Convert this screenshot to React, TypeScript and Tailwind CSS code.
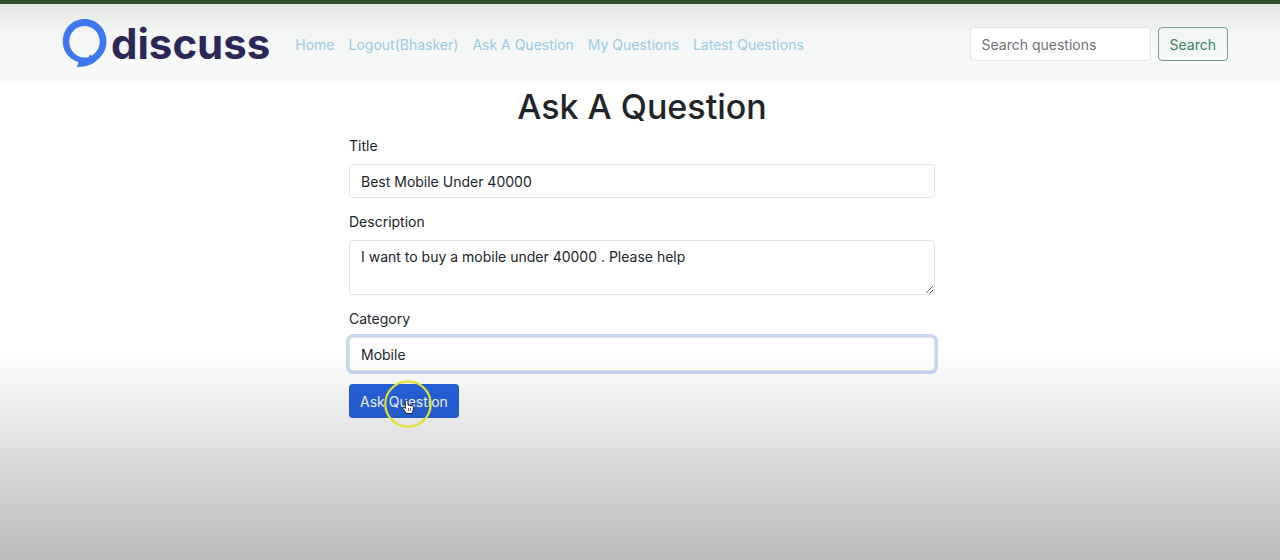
import { useState } from "react";

const links = ["Home", "Logout(Bhasker)", "Ask A Question", "My Questions", "Latest Questions"];

const fieldClass =
  "block w-full rounded-[4px] border border-[#e2e4e6] bg-white px-[11px] text-[#212529] outline-none";

function Logo() {
  return (
    <a href="#home" className="flex shrink-0 items-center" aria-label="discuss">
      <svg viewBox="0 0 46 50" className="h-[50px] w-[46px]" aria-hidden="true">
        <path
          fill="#3f78ee"
          fillRule="evenodd"
          d="M22.5 0C10.4 0 .8 9.600.8 22.500c0 9.700 6 17.600 15.400 20.500 0 2-.5 3.300-1.400 4.900C22 48.400 30 46.400 35 41c6-4.500 9.500-11 9.500-18.500C44.500 9.600 34.600 0 22.500 0Zm0 7C31 7 37.700 13.800 37.700 22.500c0 6-3 11-7.700 13.900-1.100.1-1.900-.2-2.500-.9-.1 1.200-.4 2-1 2.700-1.300.3-2.600.4-4 .4C14 38.600 7.300 31.300 7.300 22.500 7.300 13.800 14 7 22.500 7Z"
        />
      </svg>
      <span className="ml-[3px] text-[42px] font-bold leading-[50px] text-[#2b2857]">discuss</span>
    </a>
  );
}

function Pointer() {
  return (
    <svg
      viewBox="0 0 48 48"
      className="pointer-events-none absolute -top-1 left-[35px] z-10 h-12 w-12"
      aria-hidden="true"
    >
      <circle cx="24" cy="24" r="22.700" fill="none" stroke="#e4de2c" strokeWidth="2.200" />
      <path
        d="M22.500 20.500c1.100 0 1.500.7 1.500 1.500v3l4.300.9c.8.2 1.200.7 1.200 1.500l-.5 3.600-1.200 2.500h-5.300L19 28.700c-.500-1 .800-1.800 1.600-1l.700.7V22c0-.9.400-1.500 1.200-1.500Z"
        fill="#fff"
        stroke="#151b2b"
        strokeWidth="1"
      />
      <path d="M24.500 28v3M26.500 28v3" stroke="#151b2b" strokeWidth=".7" />
    </svg>
  );
}

export default function App() {
  const [title, setTitle] = useState("Best Mobile Under 40000");
  const [description, setDescription] = useState("I want to buy a mobile under 40000 . Please help");
  const [category, setCategory] = useState("Mobile");

  return (
    <div className="relative min-h-screen bg-white font-['Inter',sans-serif] text-[14px] text-[#212529]">
      <header className="border-t-4 border-[#2c5229] bg-linear-to-b from-[#e3e5e5] via-[#f3f5f5] via-35% to-[#f8faf9] to-70%">
        <div className="flex h-20 items-center pl-[62px] pr-[52px]">
          <Logo />
          <nav className="ml-[25px] flex grow items-center gap-[14px] whitespace-nowrap pt-[2px] leading-[22px]">
            {links.map((label) => (
              <a key={label} href="#" className="text-[#9acbe2]">
                {label}
              </a>
            ))}
          </nav>
          <form className="flex gap-[7px]" role="search" onSubmit={(e) => e.preventDefault()}>
            <input
              type="search"
              aria-label="Search questions"
              placeholder="Search questions"
              className="h-[34px] w-[181px] rounded-[4px] border border-[#e3e6e8] bg-white px-[11px] outline-none placeholder:text-[#6f7377]"
            />
            <button type="submit" className="h-[34px] rounded-[4px] border border-[#739f8b] px-[11px] text-[#37815e]">
              Search
            </button>
          </form>
        </div>
      </header>

      <main className="pl-1">
        <form className="mx-auto w-[586px] max-w-full" onSubmit={(e) => e.preventDefault()}>
          <h1 className="mb-[5px] text-center text-[34px] font-medium leading-[46px]">Ask A Question</h1>
          <div className="flex flex-col gap-[13px]">
            <div>
              <label htmlFor="title" className="mb-[7px] block leading-[22px]">
                Title
              </label>
              <input
                id="title"
                value={title}
                onChange={(e) => setTitle(e.target.value)}
                className={`${fieldClass} h-[34px]`}
              />
            </div>
            <div>
              <label htmlFor="description" className="mb-[7px] block leading-[22px]">
                Description
              </label>
              <textarea
                id="description"
                value={description}
                onChange={(e) => setDescription(e.target.value)}
                className={`${fieldClass} h-[55px] resize-y py-[5px] leading-[22px]`}
              />
            </div>
            <div>
              <label htmlFor="category" className="mb-[7px] block leading-[22px]">
                Category
              </label>
              <input
                id="category"
                value={category}
                onChange={(e) => setCategory(e.target.value)}
                className={`${fieldClass} h-[34px] border-[#adc4ef] ring-3 ring-[#c9d7f4]`}
              />
            </div>
            <div className="relative self-start">
              <button type="submit" className="block h-[34px] rounded-[4px] bg-[#2563de] px-[11px] text-white">
                Ask Question
              </button>
              <Pointer />
            </div>
          </div>
        </form>
      </main>

      <div className="pointer-events-none absolute inset-x-0 bottom-0 h-[210px] bg-linear-to-b from-black/0 to-black/27" />
    </div>
  );
}
